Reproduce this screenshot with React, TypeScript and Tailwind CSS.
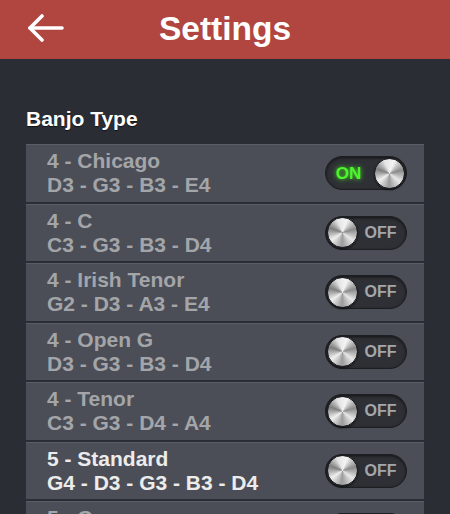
import React from 'react';

interface BanjoType {
  name: string;
  tuning: string;
  on: boolean;
  bright?: boolean;
}

const types: BanjoType[] = [
  { name: '4 - Chicago', tuning: 'D3 - G3 - B3 - E4', on: true },
  { name: '4 - C', tuning: 'C3 - G3 - B3 - D4', on: false },
  { name: '4 - Irish Tenor', tuning: 'G2 - D3 - A3 - E4', on: false },
  { name: '4 - Open G', tuning: 'D3 - G3 - B3 - D4', on: false },
  { name: '4 - Tenor', tuning: 'C3 - G3 - D4 - A4', on: false },
  { name: '5 - Standard', tuning: 'G4 - D3 - G3 - B3 - D4', on: false, bright: true },
  { name: '5 - C', tuning: 'G4 - C3 - G3 - B3 - D4', on: false },
];

const Knob = () => (
  <div className="w-[31px] h-[31px] rounded-full border border-[#1c1d20] bg-[conic-gradient(from_20deg,#f4f4f4,#8a8a8a_15%,#e8e8e8_30%,#9a9a9a_45%,#f0f0f0_60%,#7e7e7e_75%,#e4e4e4_88%,#f4f4f4)] shadow-[0_1px_2px_rgba(0,0,0,0.6)]" />
);

const Toggle: React.FC<{ on: boolean }> = ({ on }) => (
  <div className="w-[82px] h-[34px] rounded-full bg-[#2e3035] border border-[#1d1e22] shadow-[inset_0_1px_3px_rgba(0,0,0,0.6)] flex items-center px-[1px]">
    {on ? (
      <>
        <span className="flex-1 text-center pr-[4px] text-[17px] font-bold text-[#4cf52c] [text-shadow:0_0_5px_rgba(80,255,40,0.9)]">ON</span>
        <Knob />
      </>
    ) : (
      <>
        <Knob />
        <span className="flex-1 text-center pr-[2px] text-[16px] font-bold text-[#a4a6aa]">OFF</span>
      </>
    )}
  </div>
);

export default function App() {
  return (
    <div className="w-[450px] h-[514px] overflow-hidden bg-[#2a2d34] font-['Liberation_Sans',Arial,sans-serif]">
      <div className="h-[59px] bg-[#b0463f] flex items-center relative">
        <svg className="absolute left-[27px] top-[14px]" width="38" height="30" viewBox="0 0 38 30" fill="none" stroke="white" strokeWidth="3.6" strokeLinecap="round" strokeLinejoin="round">
          <path d="M35 14H3" />
          <path d="M15 2L3 14l12 12" />
        </svg>
        <h1 className="flex-1 text-center text-[33.5px] font-bold text-white">Settings</h1>
      </div>

      <div className="px-[26px] pt-[47px]">
        <h2 className="text-[21px] leading-[26px] font-bold text-white [text-shadow:0_1px_1px_rgba(0,0,0,0.6)]">Banjo Type</h2>
        <div className="mt-[12px] flex flex-col gap-[2px]">
          {types.map((t) => (
            <div
              key={t.name}
              className="h-[57.5px] shrink-0 bg-[#4b4e56] border-t border-[#5a5d65] flex items-center justify-between pl-[21px] pr-[17px]"
            >
              <div className={`text-[21px] leading-[24px] font-bold ${t.bright ? 'text-[#ececec]' : 'text-[#a3a5a9]'}`}>
                <div>{t.name}</div>
                <div>{t.tuning}</div>
              </div>
              <Toggle on={t.on} />
            </div>
          ))}
        </div>
      </div>
    </div>
  );
}
